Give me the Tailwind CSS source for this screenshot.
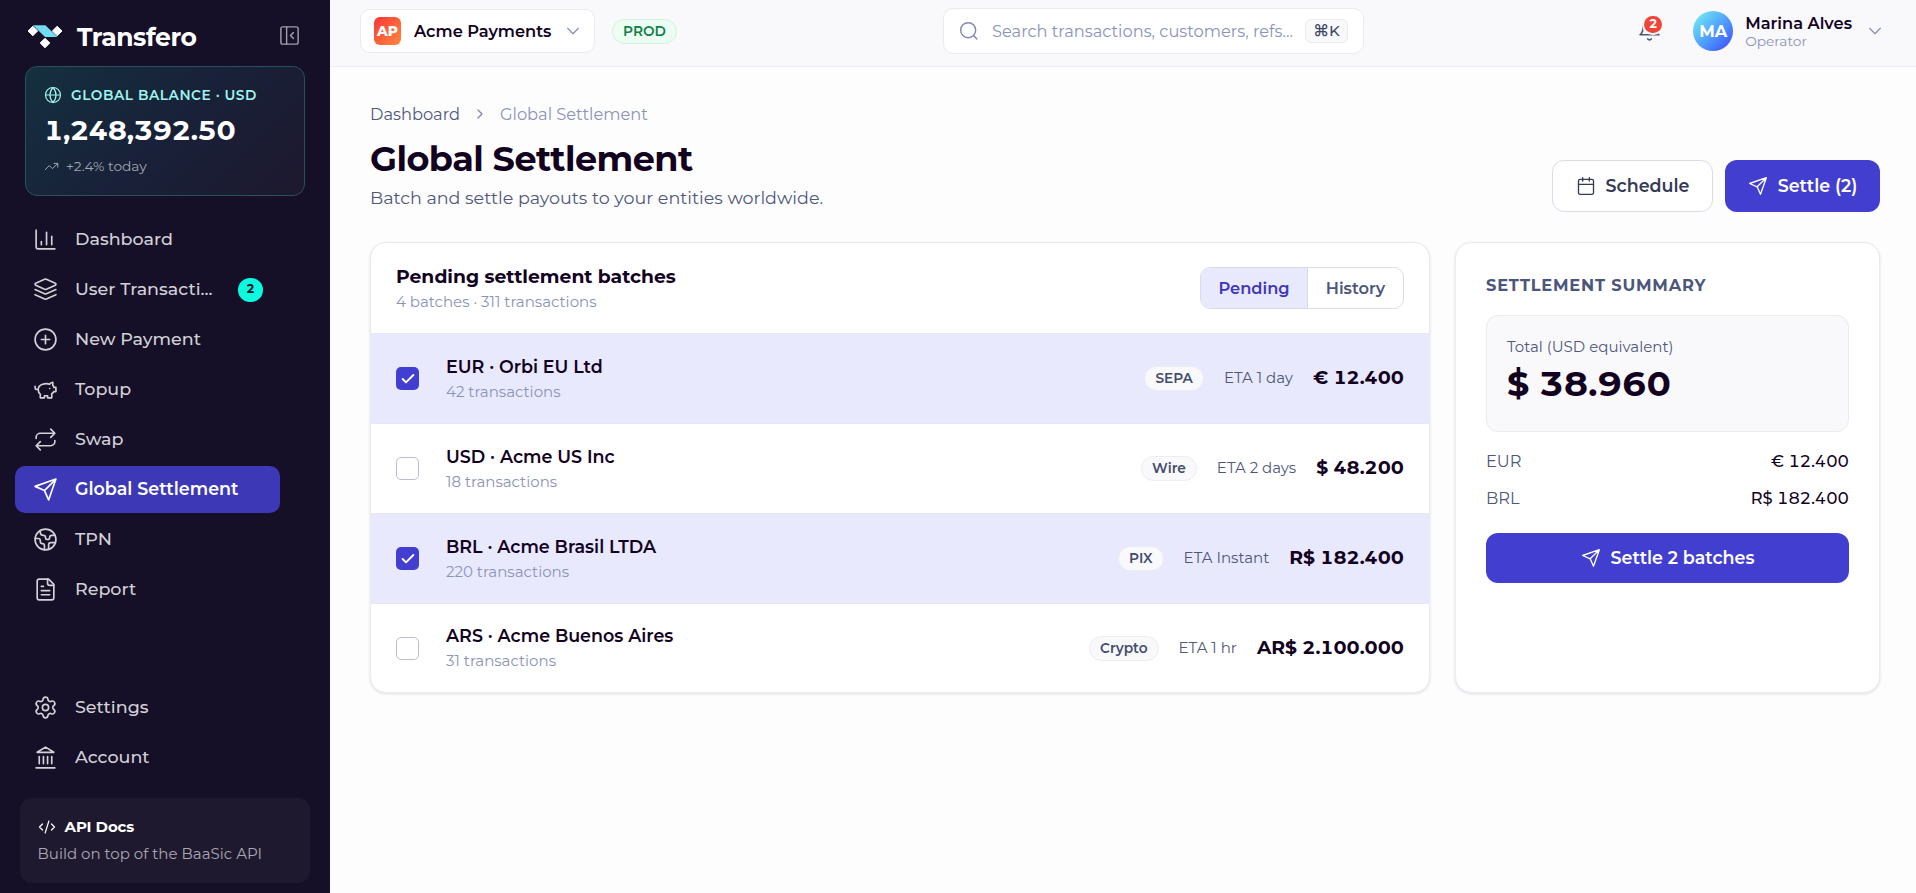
<!DOCTYPE html>
<html lang="en">
<head>
    <meta charset="UTF-8">
    <meta name="viewport" content="width=device-width, initial-scale=1.0">
    <title>Transfero - Global Settlement</title>
    <script src="https://cdn.jsdelivr.net/npm/@tailwindcss/browser@4"></script>
</head>
<body class="flex h-screen overflow-hidden bg-[#fdfdfe] font-['Montserrat','Inter',sans-serif] text-[#13021f]">
    <!-- Sidebar -->
    <aside class="flex w-[330px] shrink-0 flex-col bg-[#150f27] text-[#d3d1d8]">
        <div class="flex h-[66px] items-center pt-2 pr-[29px] pl-[27px]">
            <svg class="h-6 w-9" viewBox="0 0 36 24">
                <path fill="#fff" stroke="#fff" stroke-linejoin="round" d="M5.8 1.2 10.6 6 5.8 10.8 1 6ZM30.2 1.2 35 6 30.2 10.8 25.4 6ZM18 13.2 22.8 18 18 22.8 13.2 18Z" />
                <path fill="#74dcf2" d="M6 .3h12.4L30.4 12H18Z" />
            </svg>
            <span class="mt-0.5 ml-3.5 text-[25px] font-bold tracking-[-0.4px] text-white">Transfero</span>
            <svg class="-mt-1 ml-auto size-[23px] text-[#a09da9]" viewBox="0 0 24 24" fill="none" stroke="currentColor" stroke-width="1.5" stroke-linecap="round" stroke-linejoin="round"><rect x="3" y="3" width="18" height="18" rx="2"/><path d="M9 3v18M16 15l-3-3 3-3"/></svg>
        </div>

        <div class="mr-[25px] ml-[25px] h-[130px] rounded-xl border border-[#2b505d] bg-linear-135 from-[#14303f] via-[#182139] to-[#1d182e] px-[18px] pt-3.5">
            <div class="flex h-7 items-center gap-[9px] text-[13.75px] font-semibold tracking-[0.55px] text-[#9ff5ec]">
                <svg class="size-[18px] shrink-0" viewBox="0 0 24 24" fill="none" stroke="currentColor" stroke-width="1.6"><circle cx="12" cy="12" r="10"/><path d="M12 2a14.5 14.5 0 0 0 0 20 14.5 14.5 0 0 0 0-20M2 12h20"/></svg>
                <span>GLOBAL BALANCE · USD</span>
            </div>
            <div class="flex h-11 items-center text-[27.5px] font-bold tracking-[-0.28px] text-white tabular-nums">1,248,392.50</div>
            <div class="flex h-[26px] items-center gap-[7px] text-[13.75px] text-[#a3a6b0]">
                <svg class="size-[15px]" viewBox="0 0 24 24" fill="none" stroke="currentColor" stroke-width="1.6" stroke-linecap="round" stroke-linejoin="round"><path d="m22 7-8.5 8.5-5-5L2 17"/><path d="M16 7h6v6"/></svg>
                <span>+2.4% today</span>
            </div>
        </div>

        <nav class="mt-5 flex flex-col gap-[3px] px-[15px] text-[17.5px] font-medium">
            <a class="flex h-[47px] w-[265px] items-center gap-[17px] px-[18px]">
                <svg class="size-[25px]" viewBox="0 0 24 24" fill="none" stroke="currentColor" stroke-width="1.6" stroke-linecap="round" stroke-linejoin="round"><path d="M3 3v16a2 2 0 0 0 2 2h16M18 17V9M13 17V5M8 17v-3"/></svg>
                <span>Dashboard</span>
            </a>
            <a class="flex h-[47px] w-[265px] items-center gap-[17px] pr-[17px] pl-[18px]">
                <svg class="size-[25px]" viewBox="0 0 24 24" fill="none" stroke="currentColor" stroke-width="1.6" stroke-linecap="round" stroke-linejoin="round"><path d="m12.83 2.18a2 2 0 0 0-1.66 0L2.6 6.08a1 1 0 0 0 0 1.83l8.58 3.91a2 2 0 0 0 1.66 0l8.58-3.9a1 1 0 0 0 0-1.83Z"/><path d="m22 12-9.17 4.16a2 2 0 0 1-1.66 0L2 12"/><path d="m22 17-9.17 4.16a2 2 0 0 1-1.66 0L2 17"/></svg>
                <span>User Transacti...</span>
                <span class="ml-auto flex h-6 w-[25px] items-center justify-center rounded-full bg-[#0cfbdf] text-[12.5px] font-bold text-[#150f27]">2</span>
            </a>
            <a class="flex h-[47px] w-[265px] items-center gap-[17px] px-[18px]">
                <svg class="size-[25px]" viewBox="0 0 24 24" fill="none" stroke="currentColor" stroke-width="1.6" stroke-linecap="round" stroke-linejoin="round"><circle cx="12" cy="12" r="10"/><path d="M8 12h8M12 8v8"/></svg>
                <span>New Payment</span>
            </a>
            <a class="flex h-[47px] w-[265px] items-center gap-[17px] px-[18px]">
                <svg class="size-[25px]" viewBox="0 0 24 24" fill="none" stroke="currentColor" stroke-width="1.6" stroke-linecap="round" stroke-linejoin="round"><path d="M19 5c-1.5 0-2.8 1.4-3 2-3.5-1.5-11-.3-11 5 0 1.8 0 3 2 4.5V20h4v-2h3v2h4v-4c1-.5 1.7-1 2-2h2v-4h-2c0-1-.5-1.5-1-2V5z"/><path d="M2 9v1c0 1.1.9 2 2 2h1M16 11h.01"/></svg>
                <span>Topup</span>
            </a>
            <a class="flex h-[47px] w-[265px] items-center gap-[17px] px-[18px]">
                <svg class="size-[25px]" viewBox="0 0 24 24" fill="none" stroke="currentColor" stroke-width="1.6" stroke-linecap="round" stroke-linejoin="round"><path d="m17 2 4 4-4 4M3 11v-1a4 4 0 0 1 4-4h14M7 22l-4-4 4-4M21 13v1a4 4 0 0 1-4 4H3"/></svg>
                <span>Swap</span>
            </a>
            <a class="flex h-[47px] w-[265px] items-center gap-[17px] rounded-[10px] bg-[#3c38b6] px-[18px] font-semibold text-white">
                <svg class="size-[25px]" viewBox="0 0 24 24" fill="none" stroke="currentColor" stroke-width="1.6" stroke-linecap="round" stroke-linejoin="round"><path d="m22 2-7 20-4-9-9-4ZM22 2 11 13"/></svg>
                <span>Global Settlement</span>
            </a>
            <a class="flex h-[47px] w-[265px] items-center gap-[17px] px-[18px]">
                <svg class="size-[25px]" viewBox="0 0 24 24" fill="none" stroke="currentColor" stroke-width="1.6" stroke-linecap="round" stroke-linejoin="round"><path d="M21.54 15H17a2 2 0 0 0-2 2v4.54"/><path d="M7 3.34V5a3 3 0 0 0 3 3a2 2 0 0 1 2 2c0 1.1.9 2 2 2a2 2 0 0 0 2-2c0-1.1.9-2 2-2h3.17"/><path d="M11 21.95V18a2 2 0 0 0-2-2a2 2 0 0 1-2-2v-1a2 2 0 0 0-2-2H2.05"/><circle cx="12" cy="12" r="10"/></svg>
                <span>TPN</span>
            </a>
            <a class="flex h-[47px] w-[265px] items-center gap-[17px] px-[18px]">
                <svg class="size-[25px]" viewBox="0 0 24 24" fill="none" stroke="currentColor" stroke-width="1.6" stroke-linecap="round" stroke-linejoin="round"><path d="M15 2H6a2 2 0 0 0-2 2v16a2 2 0 0 0 2 2h12a2 2 0 0 0 2-2V7Z"/><path d="M14 2v4a2 2 0 0 0 2 2h4M10 9H8M16 13H8M16 17H8"/></svg>
                <span>Report</span>
            </a>
        </nav>

        <nav class="mt-auto flex flex-col gap-[3px] px-[15px] text-[17.5px] font-medium">
            <a class="flex h-[47px] w-[265px] items-center gap-[17px] px-[18px]">
                <svg class="size-[25px]" viewBox="0 0 24 24" fill="none" stroke="currentColor" stroke-width="1.6" stroke-linecap="round" stroke-linejoin="round"><path d="M9.671 4.136a2.34 2.34 0 0 1 4.659 0 2.34 2.34 0 0 0 3.319 1.915 2.34 2.34 0 0 1 2.33 4.033 2.34 2.34 0 0 0 0 3.831 2.34 2.34 0 0 1-2.33 4.033 2.34 2.34 0 0 0-3.319 1.915 2.34 2.34 0 0 1-4.659 0 2.34 2.34 0 0 0-3.32-1.915 2.34 2.34 0 0 1-2.33-4.033 2.34 2.34 0 0 0 0-3.831A2.34 2.34 0 0 1 6.35 6.051a2.34 2.34 0 0 0 3.319-1.915"/><circle cx="12" cy="12" r="3"/></svg>
                <span>Settings</span>
            </a>
            <a class="flex h-[47px] w-[265px] items-center gap-[17px] px-[18px]">
                <svg class="size-[25px]" viewBox="0 0 24 24" fill="none" stroke="currentColor" stroke-width="1.6" stroke-linecap="round" stroke-linejoin="round"><path d="M3 22h18M6 18v-7M10 18v-7M14 18v-7M18 18v-7M12 2l8 5H4Z"/></svg>
                <span>Account</span>
            </a>
        </nav>

        <div class="mx-5 mt-[17px] mb-2.5 h-[85px] rounded-xl bg-[#1f192f] pt-4 pl-[17.5px]">
            <div class="flex h-[26px] items-center gap-[9px] text-[15px] font-bold tracking-[-0.1px] text-white">
                <svg class="size-[18px]" viewBox="0 0 24 24" fill="none" stroke="currentColor" stroke-width="1.6" stroke-linecap="round" stroke-linejoin="round"><path d="m18 16 4-4-4-4M6 8l-4 4 4 4M14.5 4l-5 16"/></svg>
                <span>API Docs</span>
            </div>
            <div class="flex h-7 items-center text-[15px] text-[#aaa7b2]">Build on top of the BaaSic API</div>
        </div>
    </aside>

    <div class="flex min-w-0 grow flex-col">
        <!-- Top bar -->
        <header class="flex h-[67px] shrink-0 items-center border-b border-[#eeeef2] bg-[#f9f8fb] pr-[33px] pb-1 pl-[30px]">
            <button class="flex h-11 w-[235px] items-center rounded-[10px] border border-[#eaeaf0] bg-white px-[13px]">
                <span class="flex h-7 w-[27px] items-center justify-center rounded-md bg-linear-135 from-[#fb2f36] to-[#fd8440] text-[13.75px] font-extrabold text-white">AP</span>
                <span class="ml-[13px] text-[16.25px] font-semibold">Acme Payments</span>
                <svg class="ml-auto size-4 text-[#8a93bb]" viewBox="0 0 24 24" fill="none" stroke="currentColor" stroke-width="2" stroke-linecap="round" stroke-linejoin="round"><path d="m4 8 8 8 8-8"/></svg>
            </button>
            <span class="ml-[17px] flex h-[25px] w-[65px] items-center justify-center rounded-full border border-[#cff5df] bg-[#ecfdf3] text-[13.75px] font-semibold text-[#11804a]">PROD</span>

            <div class="ml-[266px] flex h-[46px] w-[421px] items-center rounded-[10px] border border-[#eaeaf0] bg-white pr-[15px] pl-[15px]">
                <svg class="size-5 text-[#7f88b4]" viewBox="0 0 24 24" fill="none" stroke="currentColor" stroke-width="1.7" stroke-linecap="round"><circle cx="11" cy="11" r="9"/><path d="m21.5 21.5-4-4"/></svg>
                <span class="ml-[13px] text-[16.25px] text-[#8a93b8]">Search transactions, customers, refs...</span>
                <kbd class="ml-auto flex h-6 w-[43px] items-center justify-center rounded-md border border-[#eaeaf0] bg-[#f9f9fb] font-[inherit] text-[15px] font-medium text-[#3c4669]"><span class="text-base">⌘</span>K</kbd>
            </div>

            <div class="relative mr-[31px] mb-1 ml-auto">
                <svg class="size-[25px] text-[#4c567a]" viewBox="0 0 24 24" fill="none" stroke="currentColor" stroke-width="1.6" stroke-linecap="round" stroke-linejoin="round"><path d="M6 8a6 6 0 0 1 12 0c0 7 3 9 3 9H3s3-2 3-9M10.3 21a1.94 1.94 0 0 0 3.4 0"/></svg>
                <span class="absolute -top-px left-[7px] flex h-[17px] w-[18px] items-center justify-center rounded-full bg-[#f04438] text-[12.5px] font-bold text-white ring-2 ring-[#f9f8fb]">2</span>
            </div>
            <span class="flex size-10 items-center justify-center rounded-full bg-linear-135 from-[#7df5f0] to-[#4338fb] text-[16.25px] font-bold text-white">MA</span>
            <div class="ml-3">
                <div class="h-5 text-[16.25px] leading-5 font-semibold">Marina Alves</div>
                <div class="h-4 text-[13.75px] leading-4 text-[#8a93b8]">Operator</div>
            </div>
            <svg class="ml-[15px] size-4 text-[#8a93bb]" viewBox="0 0 24 24" fill="none" stroke="currentColor" stroke-width="2" stroke-linecap="round" stroke-linejoin="round"><path d="m4 8 8 8 8-8"/></svg>
        </header>

        <main class="pt-[35px] pr-9 pl-10">
            <div class="flex h-6 items-center text-[16.25px]">
                <span class="text-[#4f587b]">Dashboard</span>
                <svg class="mx-3 size-4 text-[#7f88ab]" viewBox="0 0 24 24" fill="none" stroke="currentColor" stroke-width="2" stroke-linecap="round" stroke-linejoin="round"><path d="m9 18 6-6-6-6"/></svg>
                <span class="text-[#8a93b8]">Global Settlement</span>
            </div>
            <div class="flex items-end justify-between">
                <div>
                    <h1 class="mt-2.5 h-[46px] text-[35px] leading-[46px] font-bold tracking-[-0.53px]">Global Settlement</h1>
                    <p class="h-[30px] text-[17.5px] leading-8 text-[#4f587b]">Batch and settle payouts to your entities worldwide.</p>
                </div>
                <div class="flex gap-3 text-[17.5px] font-semibold">
                    <button class="flex h-[52px] w-[161px] items-center justify-center gap-[10px] rounded-xl border border-[#d9dbe9] bg-white text-[#343b55]">
                        <svg class="size-5" viewBox="0 0 24 24" fill="none" stroke="currentColor" stroke-width="1.6" stroke-linecap="round" stroke-linejoin="round"><path d="M8 2v4M16 2v4M3 10h18"/><rect x="3" y="4" width="18" height="18" rx="2"/></svg>
                        <span>Schedule</span>
                    </button>
                    <button class="flex h-[52px] w-[155px] items-center justify-center gap-[10px] rounded-xl bg-[#423ecf] text-white">
                        <svg class="size-5" viewBox="0 0 24 24" fill="none" stroke="currentColor" stroke-width="1.6" stroke-linecap="round" stroke-linejoin="round"><path d="m22 2-7 20-4-9-9-4ZM22 2 11 13"/></svg>
                        <span>Settle (2)</span>
                    </button>
                </div>
            </div>

            <div class="mt-[30px] flex h-[451px] gap-[25px]">
                <!-- Pending batches -->
                <section class="w-[1060px] overflow-hidden rounded-2xl border border-[#eaeaf0] bg-white shadow-[0_1px_3px_rgba(20,10,50,0.12)]">
                    <div class="flex h-[90px] items-center justify-between px-[25px]">
                        <div class="pt-0.5">
                            <h2 class="h-[26px] text-[18.75px] leading-[26px] font-bold">Pending settlement batches</h2>
                            <p class="h-6 text-[15px] leading-6 text-[#8a93b8]">4 batches · 311 transactions</p>
                        </div>
                        <div class="flex h-[42px] w-[204px] overflow-hidden rounded-[10px] border border-[#d9dbe9] text-[16.25px] font-semibold">
                            <button class="w-[107px] border-r border-[#d9dbe9] bg-[#e9e9fe] text-[#3b37b8]">Pending</button>
                            <button class="grow text-[#4c567a]">History</button>
                        </div>
                    </div>
                    <div class="flex h-[91px] items-center border-y border-[#e6e6f4] bg-[#e9e9fe] px-[25px]">
                        <span class="flex size-[23px] items-center justify-center rounded-[5px] bg-[#423ecf] text-white"><svg class="size-4" viewBox="0 0 24 24" fill="none" stroke="currentColor" stroke-width="3" stroke-linecap="round" stroke-linejoin="round"><path d="M20 6 9 17l-5-5"/></svg></span>
                        <div class="ml-[27px]">
                            <div class="h-[26px] text-[17.5px] leading-[26px] font-semibold">EUR · Orbi EU Ltd</div>
                            <div class="h-6 text-[15px] leading-6 text-[#8a93b8]">42 transactions</div>
                        </div>
                        <span class="ml-auto flex h-[25px] items-center rounded-full border border-[#ececf2] bg-[#f9f9fb] px-[10px] text-[13.75px] font-semibold text-[#434c6e]">SEPA</span>
                        <span class="ml-5 text-[15px] text-[#4f587b]">ETA 1 day</span>
                        <span class="ml-5 text-[18.75px] font-bold tabular-nums">€ 12.400</span>
                    </div>
                    <div class="flex h-[89px] items-center px-[25px]">
                        <span class="size-[23px] rounded-[5px] border border-[#b9bdd4] bg-white"></span>
                        <div class="ml-[27px]">
                            <div class="h-[26px] text-[17.5px] leading-[26px] font-semibold">USD · Acme US Inc</div>
                            <div class="h-6 text-[15px] leading-6 text-[#8a93b8]">18 transactions</div>
                        </div>
                        <span class="ml-auto flex h-[25px] items-center rounded-full border border-[#ececf2] bg-[#f9f9fb] px-[10px] text-[13.75px] font-semibold text-[#434c6e]">Wire</span>
                        <span class="ml-5 text-[15px] text-[#4f587b]">ETA 2 days</span>
                        <span class="ml-5 text-[18.75px] font-bold tabular-nums">$ 48.200</span>
                    </div>
                    <div class="flex h-[91px] items-center border-y border-[#e6e6f4] bg-[#e9e9fe] px-[25px]">
                        <span class="flex size-[23px] items-center justify-center rounded-[5px] bg-[#423ecf] text-white"><svg class="size-4" viewBox="0 0 24 24" fill="none" stroke="currentColor" stroke-width="3" stroke-linecap="round" stroke-linejoin="round"><path d="M20 6 9 17l-5-5"/></svg></span>
                        <div class="ml-[27px]">
                            <div class="h-[26px] text-[17.5px] leading-[26px] font-semibold">BRL · Acme Brasil LTDA</div>
                            <div class="h-6 text-[15px] leading-6 text-[#8a93b8]">220 transactions</div>
                        </div>
                        <span class="ml-auto flex h-[25px] items-center rounded-full border border-[#ececf2] bg-[#f9f9fb] px-[10px] text-[13.75px] font-semibold text-[#434c6e]">PIX</span>
                        <span class="ml-5 text-[15px] text-[#4f587b]">ETA Instant</span>
                        <span class="ml-5 text-[18.75px] font-bold tabular-nums">R$ 182.400</span>
                    </div>
                    <div class="flex h-[88px] items-center px-[25px]">
                        <span class="size-[23px] rounded-[5px] border border-[#b9bdd4] bg-white"></span>
                        <div class="ml-[27px]">
                            <div class="h-[26px] text-[17.5px] leading-[26px] font-semibold">ARS · Acme Buenos Aires</div>
                            <div class="h-6 text-[15px] leading-6 text-[#8a93b8]">31 transactions</div>
                        </div>
                        <span class="ml-auto flex h-[25px] items-center rounded-full border border-[#ececf2] bg-[#f9f9fb] px-[10px] text-[13.75px] font-semibold text-[#434c6e]">Crypto</span>
                        <span class="ml-5 text-[15px] text-[#4f587b]">ETA 1 hr</span>
                        <span class="ml-5 text-[18.75px] font-bold tabular-nums">AR$ 2.100.000</span>
                    </div>
                </section>

                <!-- Summary -->
                <section class="w-[425px] rounded-2xl border border-[#eaeaf0] bg-white px-[30px] pt-7 shadow-[0_1px_3px_rgba(20,10,50,0.12)]">
                    <h3 class="h-[30px] text-[16.25px] leading-[29px] font-bold tracking-[0.8px] text-[#4c567a]">SETTLEMENT SUMMARY</h3>
                    <div class="mt-3.5 h-[117px] rounded-xl border border-[#eaeaf0] bg-[#f9f9fb] px-5 pt-[18px]">
                        <div class="h-[26px] text-[15px] leading-[26px] text-[#4f587b]">Total (USD equivalent)</div>
                        <div class="h-12 text-[35px] leading-[48px] font-bold tabular-nums">$ 38.960</div>
                    </div>
                    <div class="mt-[11px] text-[16.25px]">
                        <div class="flex h-[37px] items-center justify-between"><span class="text-[#4f587b]">EUR</span><span class="font-medium tabular-nums">€ 12.400</span></div>
                        <div class="flex h-[37px] items-center justify-between"><span class="text-[#4f587b]">BRL</span><span class="font-medium tabular-nums">R$ 182.400</span></div>
                    </div>
                    <button class="mt-4 flex h-[50px] w-full items-center justify-center gap-[10px] rounded-xl bg-[#423ecf] text-[17.5px] font-semibold text-white">
                        <svg class="size-5" viewBox="0 0 24 24" fill="none" stroke="currentColor" stroke-width="1.6" stroke-linecap="round" stroke-linejoin="round"><path d="m22 2-7 20-4-9-9-4ZM22 2 11 13"/></svg>
                        <span>Settle 2 batches</span>
                    </button>
                </section>
            </div>
        </main>
    </div>
</body>
</html>
